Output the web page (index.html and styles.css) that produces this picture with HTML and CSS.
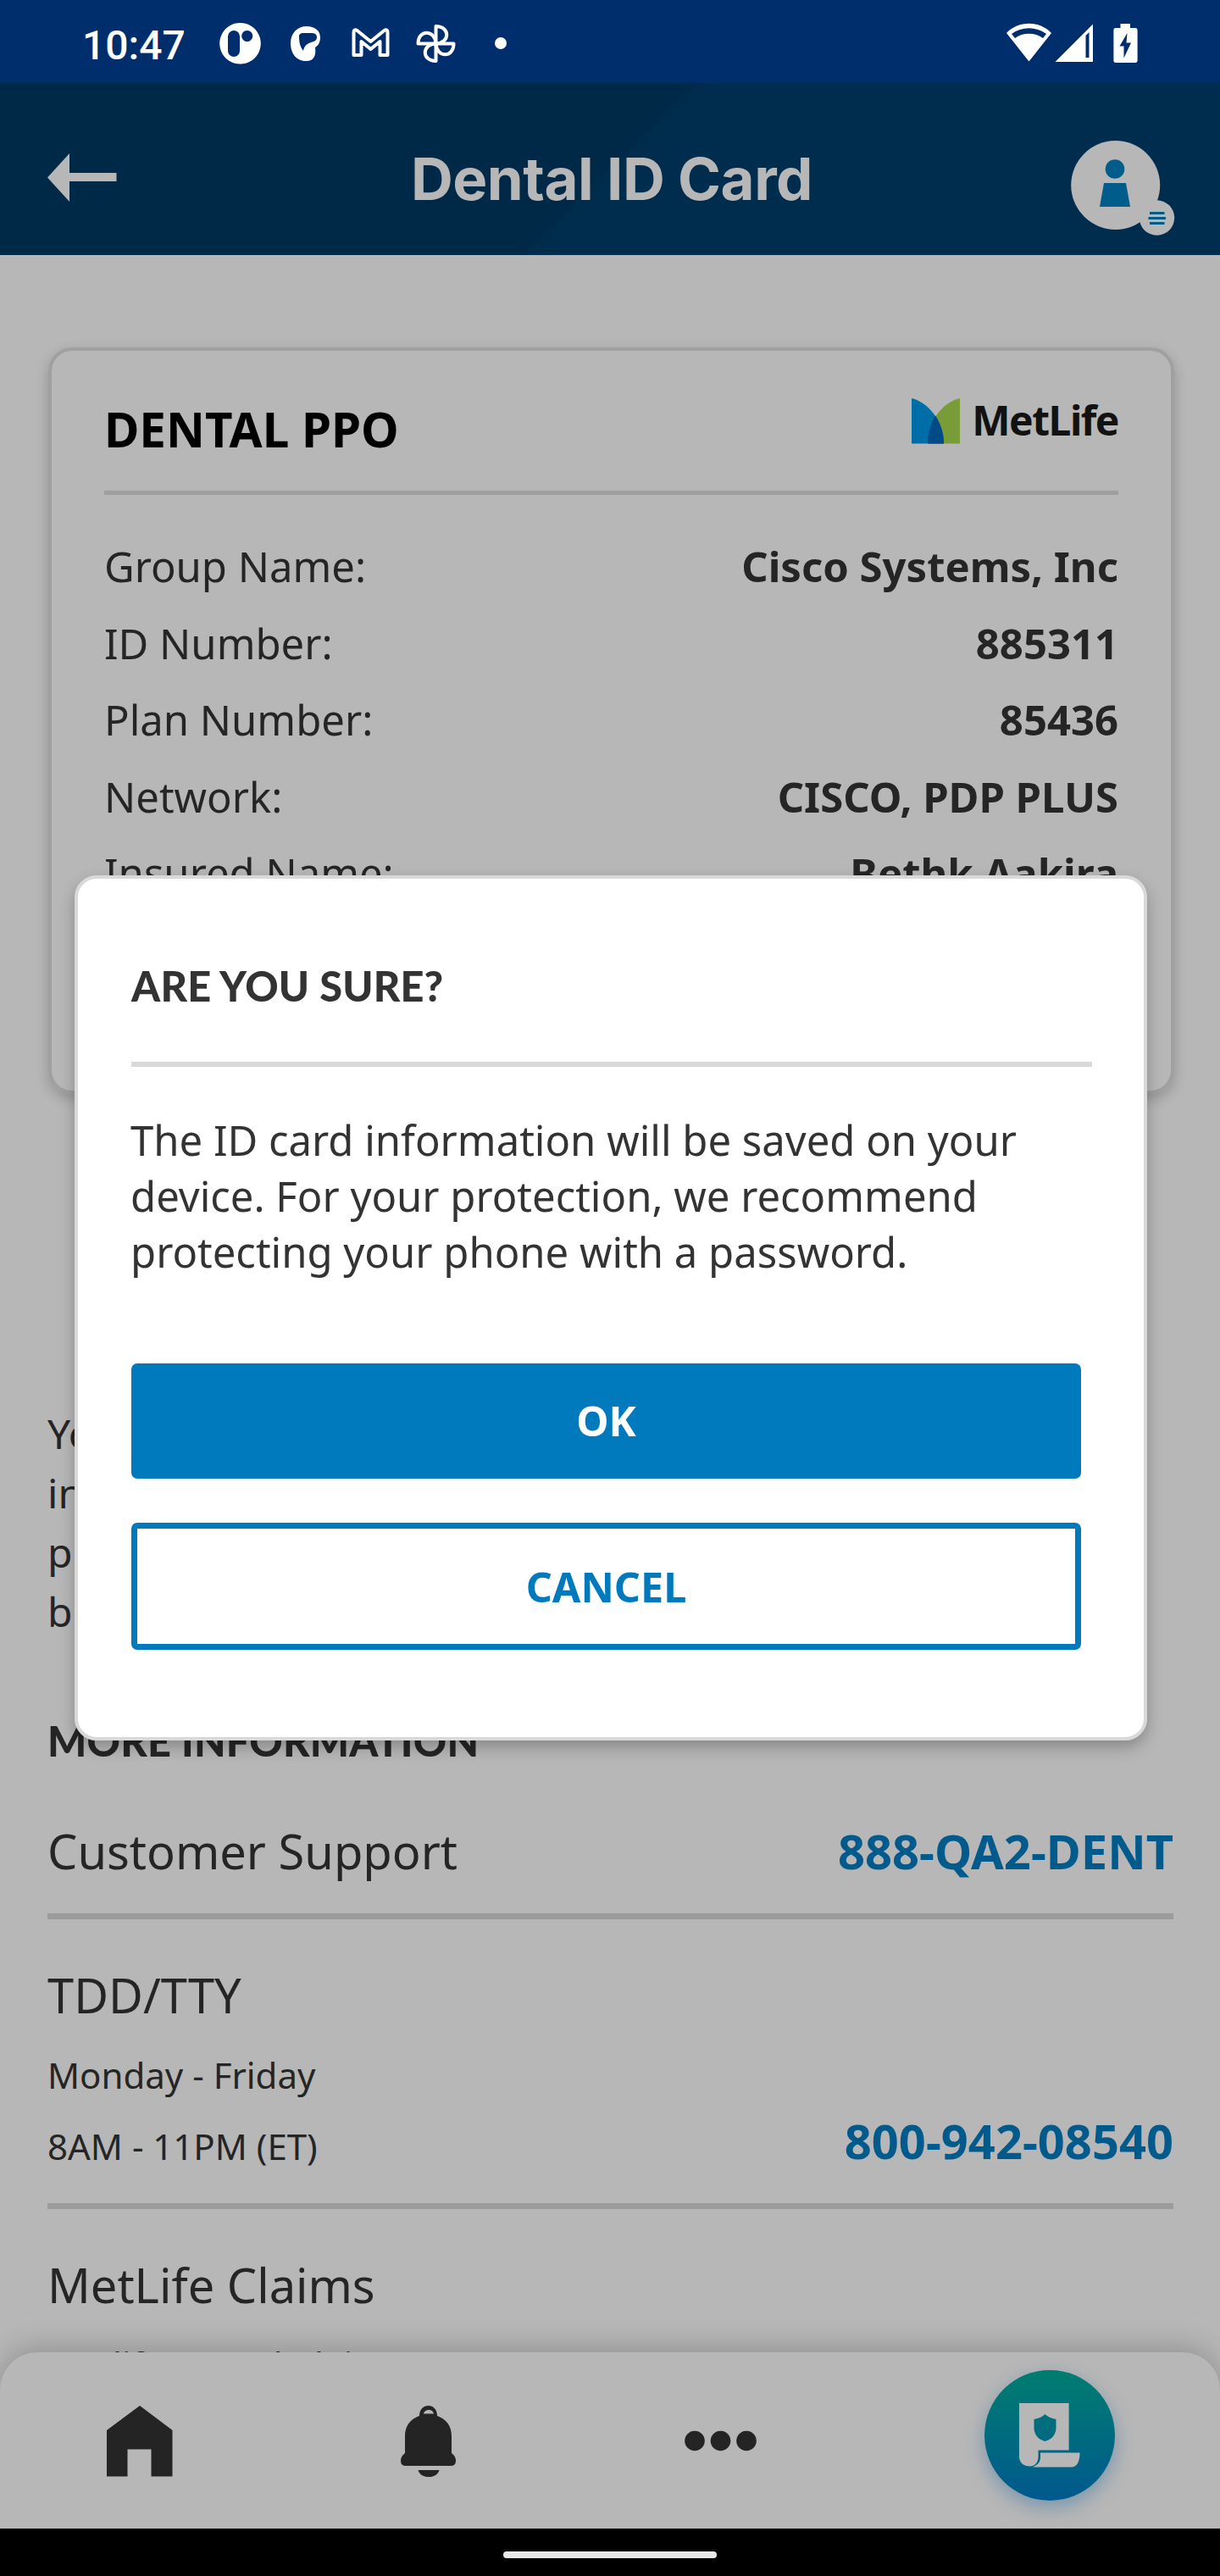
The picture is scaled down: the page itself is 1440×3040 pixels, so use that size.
FILE: index.html
```
<!DOCTYPE html>
<html lang="en">
<head>
<meta charset="utf-8">
<title>Dental ID Card</title>
<link rel="stylesheet" href="styles.css">
</head>
<body>
<div class="phone">
  <div class="status">
    <span class="clock">10:47</span>
    <svg class="notices" width="350" height="98" viewBox="255 0 350 98" fill="#fff">
      <path fill-rule="evenodd" d="M283.500 27a24.300 24.300 0 1 0 .01 0zM276 36a7 7 0 0 1 7 7v17a7 7 0 0 1-14 0V43a7 7 0 0 1 7-7zM291.700 36a6.500 6.500 0 1 1-.01 0z"/>
      <path fill-rule="evenodd" d="M362 31c9 0 16 5 16 13 0 7-3 10-6 12 1 8 0 16-11 16-12 0-18-10-18-21 0-12 8-20 19-20zM353 43c0 6 1 12 5 17 1-6 4-8 9-10 5-1 7-3 7-6 0-4-3-5-7-5h-9c-3 0-5 1-5 4z"/>
      <path fill="none" stroke="#fff" stroke-width="4" stroke-linejoin="round" d="M417.500 65V38q0-4 4-2L437.500 49l16-13q4-2 4 2v27h-9V49l-11 9-11-9v16z"/>
      <g fill="none" stroke="#fff" stroke-width="4" stroke-linejoin="round">
        <path d="M514.500 31c17 0 17 20 0 20.500z"/>
        <path d="M535.500 51.500c0 17-20 17-21 0z"/>
        <path d="M514.500 72c-17 0-17-20 0-20.500z"/>
        <path d="M493.500 51.500c0-17 20-17 21 0z"/>
      </g>
      <circle cx="591" cy="51" r="7"/>
    </svg>
    <svg class="signals" width="164" height="98" viewBox="1184 0 164 98" fill="#fff">
      <path fill-rule="evenodd" d="M1214.500 72.500L1188 39c14-15 39-15 53 0zM1194 40l4 5c9-7 24-7 33 0l4-5c-12-9-29-9-41 0z"/>
      <path fill-rule="evenodd" d="M1245.500 73L1290 28.500V73zM1281.500 42v26h4V38z"/>
      <path fill-rule="evenodd" d="M1322.500 28H1334v5h6q2.600 0 2.600 3v35q0 3-2.600 3h-23q-2.600 0-2.600-3V36q0-3 2.600-3h5.500zM1330.500 39l-9 15.500h5v14l8.500-18h-5.500z"/>
    </svg>
  </div>

  <header class="header">
    <svg width="82" height="58" viewBox="0 0 82 58" fill="#b7b7b7"><path d="M0 28.500L26 0v23h55.500v10H26v24z"/></svg>
    <h1 class="title">Dental ID Card</h1>
    <svg class="avatar" width="124" height="114" viewBox="1264 165 124 114" fill="#b7b7b7">
      <circle cx="1316.700" cy="218.500" r="52.500"/>
      <circle cx="1365.500" cy="257" r="20.700"/>
      <g fill="#005c8a"><circle cx="1316" cy="199.500" r="11.300"/><path d="M1303 216h26l5 28h-36z"/>
      <path d="M1357 250h17.500v3H1357zM1355.500 256h20.500v3h-20.500zM1357 262h17.500v3H1357z"/></g>
    </svg>
  </header>

  <main class="content">
    <section class="card">
      <div class="card-head">
        <h2 class="plan">DENTAL PPO</h2>
        <div class="brand">
          <svg width="57" height="54" viewBox="0 0 57 54"><path fill="#7a9c38" d="M57 0C38 4 19 26 19 53.500h38z"/><path fill="#006ea6" d="M0 0c18 4 38 26 38 53.500H0z"/><path fill="#004b87" d="M28.200 20.500C23 29 19 40 19 53.500h19c0-13-4-24-9.800-33z"/></svg>
          <span class="brand-name">MetLife</span>
        </div>
      </div>
      <dl class="rows">
        <div class="row"><dt>Group Name:</dt><dd>Cisco Systems, Inc</dd></div>
        <div class="row"><dt>ID Number:</dt><dd>885311</dd></div>
        <div class="row"><dt>Plan Number:</dt><dd>85436</dd></div>
        <div class="row"><dt>Network:</dt><dd>CISCO, PDP PLUS</dd></div>
        <div class="row"><dt>Insured Name:</dt><dd>Bethk Aakira</dd></div>
      </dl>
    </section>
    <p class="note">Yo<br>in<br>p<br>b</p>
    <h3 class="more">MORE INFORMATION</h3>
    <div class="contact">
      <div class="name">Customer Support</div>
      <a class="tel">888-QA2-DENT</a>
    </div>
    <div class="contact tall">
      <div><div class="name">TDD/TTY</div><div class="hours">Monday - Friday<br>8AM - 11PM (ET)</div></div>
      <a class="tel">800-942-08540</a>
    </div>
    <div class="contact last">
      <div><div class="name">MetLife Claims</div><div class="hours">Metlife Dental Claims</div></div>
    </div>
  </main>

  <nav class="tabs">
    <svg class="tab" width="78" height="84" viewBox="0 0 78 84" fill="#242424"><path d="M39 0l38.500 29v54.500H52.500v-32h-28v32H0V29z"/></svg>
    <svg class="tab" width="66" height="84" viewBox="0 0 66 84" fill="#242424">
      <path fill-rule="evenodd" d="M22 12C22-4 43-4 43 12c11 4 17 12 17 24v20c4 3 5 6 5 9q0 6-6 6H6q-6 0-6-6c0-3 1-6 5-9V36C5 24 11 16 22 12zM27 9.500h12c-1-6-11-6-12 0z"/><path d="M20.500 76h25c-3 11-22 11-25 0z"/>
    </svg>
    <svg class="tab" width="86" height="84" viewBox="0 0 86 84" fill="#242424"><circle cx="12" cy="41.500" r="11.800"/><circle cx="42.500" cy="41.500" r="11.800"/><circle cx="73" cy="41.500" r="11.800"/></svg>
    <div class="fab">
      <svg width="72" height="76" viewBox="0 0 72 76" fill="#b7b7b7"><path fill-rule="evenodd" d="M0 0h58.600v55.500H22.500V63c0 7-4 11.500-10 11.500C5 74.500 0 70 0 63zM30.500 13c-3 3-7 5-13 6v10c0 8 5 14 13 16 8-2 13-8 13-16V19c-6-1-10-3-13-6z"/><path d="M25 58.500h46.500c0 10-3 17-10 17H16c6-3 9-6 9-12z"/></svg>
    </div>
  </nav>
  <div class="system"><div class="pill"></div></div>

  <div class="dialog" role="dialog">
    <h2 class="ask">ARE YOU SURE?</h2>
    <p class="message">The ID card information will be saved on your<br>device. For your protection, we recommend<br>protecting your phone with a password.</p>
    <button class="btn ok">OK</button>
    <button class="btn cancel">CANCEL</button>
  </div>
</div>
</body>
</html>
```
FILE: styles.css
```
* { box-sizing: border-box; margin: 0; padding: 0; }
body { background: #b7b7b7; font-family: "Noto Sans", sans-serif; color: #252525; }
svg { display: block; flex: none; }

.phone { position: relative; width: 1440px; height: 3040px; overflow: hidden; display: flex; flex-direction: column; background: #b7b7b7; }

.status { height: 98px; flex: none; display: flex; align-items: center; padding: 0 92px 0 97px; background: #002d6c; color: #fff; }
.clock { width: 158px; padding-top: 10px; font: 500 48px/60px Roboto, sans-serif; }
.signals { margin-left: auto; }

.header { height: 203px; flex: none; display: flex; align-items: center; justify-content: space-between; padding: 20px 52px 0 56px; background: linear-gradient(135deg, #002847 0 49.500%, #002d4d 50.500%); }
.title { font: 700 69px/84px Inter, sans-serif; letter-spacing: -.5px; color: #b7b7b7; padding: 2px 0 0 42px; }
.avatar { margin-top: 24px; }

.content { height: 2683px; flex: none; padding: 109px 55px 0 56px; overflow: hidden; }

.card { width: 1329px; height: 881px; margin-left: 1px; padding: 53px 62px 0; border: 4px solid #a0a0a0; border-radius: 28px; box-shadow: 0 6px 16px rgba(0, 0, 0, .2); }
.card-head { height: 117px; display: flex; justify-content: space-between; align-items: flex-start; border-bottom: 5px solid #9f9f9f; }
.plan { font-size: 56.500px; line-height: 80px; color: #000; }
.brand { display: flex; align-items: flex-start; gap: 14px; padding-top: 3px; }
.brand-name { font-size: 48px; line-height: 52px; font-weight: 700; letter-spacing: -1.500px; color: #121212; }
.rows { padding-top: 39px; }
.row { display: flex; justify-content: space-between; font-size: 49px; line-height: 90.600px; }
.row dd { font-weight: 700; }

.note { margin-top: 366px; font-size: 48px; line-height: 70px; }
.more { margin-top: 87px; font: 900 48.700px/60px Lato, sans-serif; letter-spacing: .2px; }
.contact { display: flex; justify-content: space-between; align-items: flex-end; margin-top: 51px; padding-bottom: 25px; border-bottom: 7px solid #9b9b9b; }
.more + .contact { margin-top: 62px; padding-bottom: 36px; }
.contact.last { border: 0; }
.name { font-size: 56px; line-height: 76px; }
.tel { font-size: 56px; line-height: 76px; font-weight: 700; color: #005a8b; }
.tall .tel { margin-bottom: 11px; }
.hours { margin-top: 15px; font-size: 42px; line-height: 84px; }

.tabs { position: absolute; left: 0; right: 0; top: 2776px; height: 208px; display: flex; align-items: flex-start; padding: 0 124px 0 126px; background: #b7b7b7; border-radius: 44px 44px 0 0; box-shadow: 0 -4px 34px rgba(0, 0, 0, .22); }
.tab { margin-top: 63px; margin-right: 269px; }
.tab + .tab + .tab { margin-right: 0; }
.fab { width: 154px; height: 154px; margin: 21px 0 0 auto; padding: 39px 0 0 41px; border-radius: 50%; background: linear-gradient(#007d70, #00598e); box-shadow: 0 8px 22px rgba(0, 90, 160, .35); }
.system { height: 56px; flex: none; display: flex; align-items: center; justify-content: center; background: #000; position: relative; }
.pill { width: 252px; height: 8px; margin-top: 6px; border-radius: 4px; background: #e8e8e8; }

.dialog { position: absolute; left: 88px; top: 1033px; width: 1266px; height: 1021px; padding: 90px 61px 0 63px; display: flex; flex-direction: column; align-items: flex-start; background: #fff; color: #333; border: 4px solid #d9d9d9; border-radius: 26px; box-shadow: 0 8px 18px rgba(0, 0, 0, .25); }
.ask { width: 1134px; height: 132px; font: 900 48.700px/72px Lato, sans-serif; letter-spacing: .2px; border-bottom: 6px solid #d9d9d9; }
.message { margin-top: 53px; margin-left: -1px; font-size: 49px; line-height: 66px; white-space: nowrap; }
.btn { width: 1121px; border: 0; border-radius: 7px; font: 700 48.500px/66px "Noto Sans", sans-serif; }
.ok { height: 136px; margin-top: 99px; padding-bottom: 2px; background: #0079bd; color: #fff; }
.cancel { height: 150px; margin-top: 52px; padding-bottom: 1px; background: #fff; color: #0079bd; border: 7px solid #0079bd; }
```
